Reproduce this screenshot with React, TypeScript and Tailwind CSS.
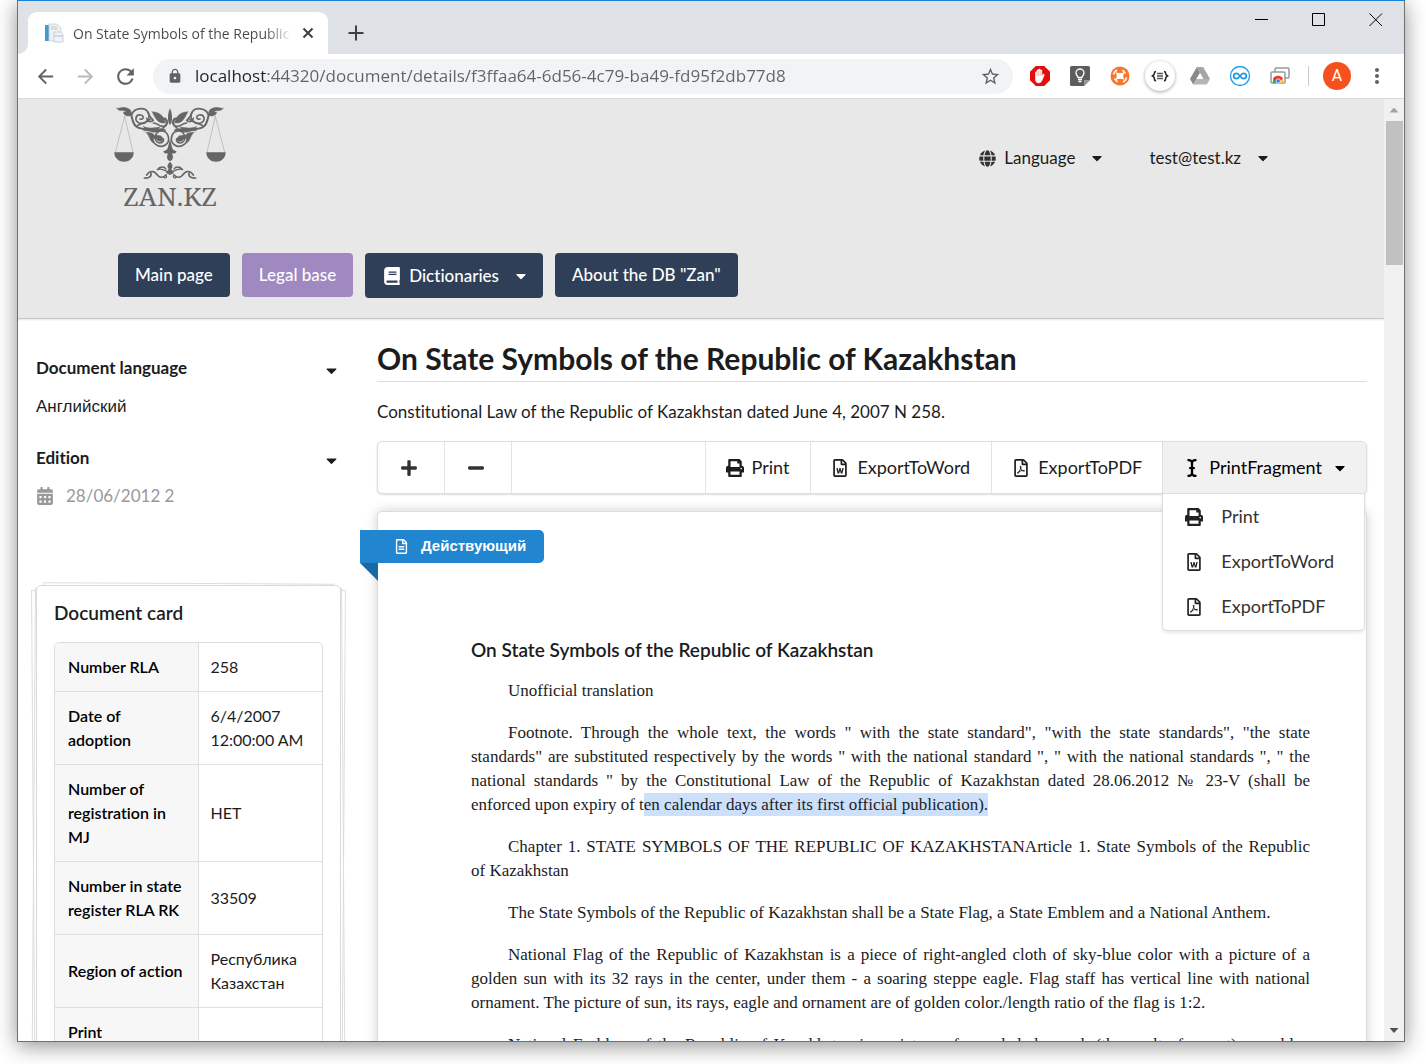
import { FaPrint, FaRegFileWord, FaRegFilePdf, FaICursor, FaPlus, FaMinus, FaGlobe, FaCaretDown, FaBook, FaRegFileAlt, FaCalendarAlt } from "react-icons/fa";
import { MdArrowBack, MdArrowForward, MdRefresh, MdLock, MdStarBorder, MdMoreVert } from "react-icons/md";

function Favicon() {
  return (
    <svg width="20" height="20" viewBox="0 0 20 20" className="shrink-0" aria-hidden="true">
      <rect x="1" y="2" width="4" height="16" fill="#3f9bd8" />
      <path d="M5 1h8l4 4v13H5z" fill="#eef1f4" stroke="#c9ced3" strokeWidth=".8" />
      <path d="M7 4h6M7 6h7" stroke="#c5cad0" />
      <path d="M10 9h7l2 3v7h-9z" fill="#f1f3f6" stroke="#bcc4d4" strokeWidth=".8" />
      <path d="M10 13h9" stroke="#b5bed2" />
    </svg>
  );
}

function TitleBar() {
  return (
    <div className="flex h-[53px] shrink-0 items-end justify-between bg-[#dee1e6]">
      <div className="flex h-full items-end">
        <div className="h-3 w-[10px] rounded-br-[10px] bg-[#dee1e6] shadow-[4px_4px_0_4px_#fff] [clip-path:inset(0)]" />
        <div className="flex h-[42px] w-[300px] items-center rounded-t-[9px] bg-white pl-4">
          <Favicon />
          <span className="ml-[9px] w-[219px] overflow-hidden whitespace-nowrap bg-linear-to-r from-[#45494d] from-88% to-white bg-clip-text font-['Open_Sans','Noto_Sans',sans-serif] text-[14px] text-transparent">
            On State Symbols of the Republic
          </span>
          <button aria-label="Close tab" className="ml-[10px]">
            <svg width="12" height="12" viewBox="0 0 12 12" className="block"><path d="M1.500 1.500l9 9M10.500 1.500l-9 9" stroke="#3c4043" strokeWidth="2" /></svg>
          </button>
        </div>
        <button aria-label="New tab" className="mb-[13px] ml-5">
          <svg width="16" height="16" viewBox="0 0 16 16" className="block"><path d="M8 .5v15M.5 8h15" stroke="#3c4043" strokeWidth="2" /></svg>
        </button>
      </div>
      <div className="flex h-full items-start gap-[43px] pr-[21px] pt-[11px]">
        <button aria-label="Minimize"><svg width="14" height="14" viewBox="0 0 14 14" className="block"><path d="M0 7.500h13" stroke="#000" /></svg></button>
        <button aria-label="Maximize"><svg width="14" height="14" viewBox="0 0 14 14" className="block"><path d="M.5 1.500h12v12H.5z" fill="none" stroke="#000" /></svg></button>
        <button aria-label="Close"><svg width="14" height="14" viewBox="0 0 14 14" className="block"><path d="M.5 1.500l12.500 12.500M13 1.500L.5 14" stroke="#000" /></svg></button>
      </div>
    </div>
  );
}

function Extensions() {
  return (
    <div className="flex items-center gap-[18px]">
      <button aria-label="Ad blocker">
        <svg width="22" height="22" viewBox="0 0 22 22" className="block">
          <path d="M6.800 1h8.400L21 6.800v8.400L15.200 21H6.800L1 15.200V6.800z" fill="#e40d0d" />
          <path d="M6.500 11.500V7.200q.7-1 1.400 0V5.400q.8-1.200 1.600 0V4.600q.8-1.200 1.600 0v.6q.9-1.100 1.700 0v5.800l1-1.500q1.200-.8 1.600.3l-2.500 5.800q-.9 2.300-3 2.300-3.200 0-3.400-3z" fill="#fff" stroke="#fff" strokeWidth=".6" />
          <path d="M8 7v4M9.600 6v5M11.200 6v5" stroke="#e40d0d" strokeWidth=".3" />
        </svg>
      </button>
      <button aria-label="Notes">
        <svg width="22" height="22" viewBox="0 0 22 22" className="block">
          <path d="M2.500 1h17q1.500 0 1.500 1.500V15l-6 6H2.500Q1 21 1 19.500v-17Q1 1 2.500 1z" fill="#5d5d5d" />
          <path d="M15 21v-6h6z" fill="#9b9b9b" />
          <path d="M9 12.500c0-1.500-2-2.200-2-4.500a4 4 0 018 0c0 2.300-2 3-2 4.500zM9 14.500h4M9.500 16.500h3" fill="none" stroke="#fff" strokeWidth="1.300" />
        </svg>
      </button>
      <button aria-label="Orbit">
        <svg width="22" height="22" viewBox="0 0 22 22" className="block">
          <circle cx="11" cy="11" r="9.500" fill="#f4772b" />
          <path d="M8 8.500q3 1 6 0-1 2.500 0 5-3-1-6 0 1-2.500 0-5z" fill="#fff" stroke="#fff" strokeWidth="1.500" />
          <path d="M4.500 9.500q.5-3 3.500-4.500M17.500 12.500q-.5 3-3.500 4.500M13.500 5l3 3.500M5.500 13.500l3 3.500" fill="none" stroke="#fff" strokeWidth="1.600" />
        </svg>
      </button>
      <button aria-label="JSON viewer" className="-mx-1 flex size-[30px] items-center justify-center rounded-full bg-white shadow-[0_1px_3px_1px_#00000038]">
        <svg width="18" height="14" viewBox="0 0 18 14" className="block">
          <path d="M5 2.500Q3.500 2.500 3.500 4T1.500 7q2 .8 2 3t1.500 1.500M13 2.500q1.500 0 1.500 1.500t2 3q-2 .8-2 3t-1.500 1.500" fill="none" stroke="#222" strokeWidth="1.600" />
          <path d="M6 4.500h6M6 7h6M6 9.500h6" stroke="#555" strokeWidth="1.300" />
        </svg>
      </button>
      <button aria-label="Drive">
        <svg width="22" height="22" viewBox="0 0 22 22" className="block">
          <path d="M7.800 2h6.400L21 14H14z" fill="#a5a5a5" />
          <path d="M7.800 2L1 14l3.200 5.500L11 8z" fill="#8a8a8a" />
          <path d="M7.500 14H21l-3.200 5.500H4.200z" fill="#b5b5b5" />
          <path d="M11 8l3.500 6h-7z" fill="#fff" />
        </svg>
      </button>
      <button aria-label="Infinity">
        <svg width="22" height="22" viewBox="0 0 22 22" className="block">
          <circle cx="11" cy="11" r="9.500" fill="#fff" stroke="#1b9be8" strokeWidth="1.300" />
          <path d="M11 11c-1.800-2.500-2.800-2.700-3.600-2.700a2.700 2.700 0 000 5.400c1 0 2.100-.6 3.600-2.700s2.600-2.700 3.600-2.700a2.700 2.700 0 010 5.400c-.8 0-1.800-.2-3.600-2.700z" fill="none" stroke="#1b9be8" strokeWidth="1.800" />
        </svg>
      </button>
      <button aria-label="Cast tabs">
        <svg width="22" height="22" viewBox="0 0 22 22" className="block">
          <rect x="6" y="3" width="14" height="10" rx="1" fill="#fff" stroke="#999" strokeWidth="1.500" />
          <rect x="2" y="7" width="14" height="11" rx="1" fill="#fff" stroke="#999" strokeWidth="1.500" />
          <path d="M4 18a5 5 0 011-5l4 5z" fill="#2fa84f" />
          <path d="M4 14a5.500 5.500 0 0110 0l-3 2H7z" fill="#e23c2e" />
          <path d="M14 14a5 5 0 010 4h-5z" fill="#f8c52b" />
          <circle cx="9.200" cy="16" r="2.200" fill="#3b7ded" stroke="#fff" strokeWidth=".7" />
        </svg>
      </button>
    </div>
  );
}

function Toolbar() {
  return (
    <div className="flex h-[45px] shrink-0 items-center border-b border-[#d5d7da] bg-white pl-4 pr-[15px] text-[#5f6368]">
      <button aria-label="Back"><MdArrowBack size={23} /></button>
      <button aria-label="Forward" className="ml-[17px] text-[#b8babd]"><MdArrowForward size={23} /></button>
      <button aria-label="Reload" className="ml-4"><MdRefresh size={25} /></button>
      <div className="ml-[15px] flex h-[35px] flex-1 items-center rounded-full bg-[#f1f3f4] pl-[14px] pr-3">
        <MdLock size={16} />
        <input
          aria-label="Address"
          readOnly
          value="localhost:44320/document/details/f3ffaa64-6d56-4c79-ba49-fd95f2db77d8"
          className="ml-3 min-w-0 flex-1 bg-linear-to-r from-[#202124] from-[72px] to-[#5f6368] to-[72px] bg-clip-text font-['Open_Sans','Noto_Sans',sans-serif] text-[17px] text-transparent outline-none"
        />
        <button aria-label="Bookmark"><MdStarBorder size={21} /></button>
      </div>
      <div className="ml-4 flex items-center">
        <Extensions />
        <div className="ml-[17px] h-5 w-px bg-[#ccc]" />
        <button aria-label="Account" className="ml-[14px] size-7 rounded-full bg-[#f6511d] font-['Roboto',sans-serif] text-[16px] text-white">A</button>
        <button aria-label="Menu" className="ml-[14px]"><MdMoreVert size={24} /></button>
      </div>
    </div>
  );
}

function HalfOrnament() {
  return (
    <g fill="none" stroke="#666" strokeWidth="5" strokeLinecap="round" strokeLinejoin="round">
      <path d="M104 64L76 172M104 64l25 108" stroke="#999" strokeWidth="1.500" />
      <path d="M73 172h58c0 38-58 38-58 0z" fill="#666" stroke="none" />
      <path d="M80 40c12 0 16-6 28-2 14 2 18 14 14 24-10 4-22-2-22-10l8-2c-10-6-18 2-28-10z" fill="#666" strokeWidth="1" />
      <path d="M118 46c10 14 6 36 20 48 12 10 28 10 50 8" strokeWidth="6" />
      <path d="M126 58c4-18 38-24 48-6 10 20-8 38-26 32-16-6-12-26 4-24 12 2 8 16-2 12" />
      <path d="M174 52c4 14 8 18 16 24-10 8-18 2-20-6M142 92c12-8 28-8 40-20" />
      <path d="M186 50c22 0 36 12 40 34-22 2-28-10-40-34z" fill="#666" strokeWidth="1" />
      <path d="M190 84c14 0 18 12 30 10 14-2 12-24-2-24M226 70c10 10 6 22-6 28" />
      <path d="M160 94c14 8 34 4 50 2l-4 6c10-4 18-4 22 6-12-4-20 4-32 4-14 0-22-8-36-4 6-4 4-8 0-14z" fill="#666" strokeWidth="1" />
      <path d="M168 112c20-2 30 8 28 20-4-4-8 0-6 12-12-6-10-20-22-32z" fill="#666" strokeWidth="1" />
      <path d="M188 134c4 16 22 26 38 16 16-10 12-40-10-42-22-2-28 32-8 36 10 0 14-6 12-12" />
      <path d="M198 120l14 2 8 8-4 10-12-2-8-8z" fill="#666" strokeWidth="1" />
      <path d="M163 249c12 2 22-4 20-14M170 240c10-16 24-12 32 0 8 10 18 8 26 0" />
      <path d="M202 224c12-6 24 2 34 8M228 240c4 6 0 10-6 8M204 222c6-8 20-8 24 0" strokeWidth="4" />
    </g>
  );
}

function Logo() {
  return (
    <a href="#" className="-ml-1 block w-28 text-center">
      <svg width="112" height="74" viewBox="72 36 336 222" className="block" aria-hidden="true">
        <HalfOrnament />
        <g transform="translate(480 0) scale(-1 1)"><HalfOrnament /></g>
        <path d="M240 40c6 12 8 30 4 44l-4 6-4-6c-4-14-2-32 4-44zM240 132l6 24c2 12 12 10 14 14-4 8-12 4-14 6 6 10 2 20-6 22-8-2-12-12-6-22-2-2-10 2-14-6 2-4 12-2 14-14zM240 200c8 8 10 14 4 22l8 12-12 6-12-6 8-12c-6-8-4-14 4-22z" fill="#666" />
        <path d="M240 90l12 14-12 14-12-14z" fill="#e8e8e8" />
      </svg>
      <span className="mt-[2px] block font-['Noto_Serif','Liberation_Serif',serif] text-[26px] leading-[26px] text-[#666]">ZAN.KZ</span>
    </a>
  );
}

function Header() {
  return (
    <header className="flex h-[220px] shrink-0 flex-col border-b border-[#c6c6c6] bg-[#e8e8e8] px-[100px] shadow-[0_1px_2px_#0000001a]">
      <div className="flex h-[116px] justify-between pt-2">
        <Logo />
        <div className="mr-[13px] flex h-[102px] items-center gap-11 text-[17px] text-[#1c1c1c]">
          <button className="flex items-center"><FaGlobe size={17} className="mr-2 text-[#333]" />Language<FaCaretDown size={16} className="ml-[14px]" /></button>
          <button className="flex items-center">test@test.kz<FaCaretDown size={16} className="ml-[14px]" /></button>
        </div>
      </div>
      <nav className="mt-[38px] flex items-start gap-3 text-[17px] font-medium text-white">
        <a href="#" className="flex h-11 items-center rounded-[4px] bg-[#2e3f57] px-[17px]">Main page</a>
        <a href="#" className="flex h-11 items-center rounded-[4px] bg-[#a088c0] px-[17px]">Legal base</a>
        <button className="flex h-[45px] items-center rounded-[4px] bg-[#2e3f57] px-[14px]"><FaBook size={18} className="ml-1 mr-2" />Dictionaries<FaCaretDown size={16} className="ml-[14px]" /></button>
        <a href="#" className="flex h-11 items-center rounded-[4px] bg-[#2e3f57] px-[17px]">About the DB "Zan"</a>
      </nav>
    </header>
  );
}

const rows = [
  ["Number RLA", "258"],
  ["Date of adoption", "6/4/2007 12:00:00 AM"],
  ["Number of registration in MJ", "НЕТ"],
  ["Number in state register RLA RK", "33509"],
  ["Region of action", "Республика Казахстан"],
  ["Print", ""],
];

function Sidebar() {
  return (
    <aside className="w-[324px] shrink-0 pl-[18px] pt-[37px] text-[#1b1c1d]">
      <button className="flex w-[304px] items-center justify-between text-[17px] font-bold leading-6">Document language<FaCaretDown size={17} className="mt-1" /></button>
      <p className="mt-[15px] font-['Liberation_Sans',sans-serif] text-[17px] leading-6">Английский</p>
      <button className="mt-[27px] flex w-[304px] items-center justify-between text-[17px] font-bold leading-6">Edition<FaCaretDown size={17} className="mt-1" /></button>
      <p className="mt-[14px] flex items-center text-[17px] leading-6 text-[#999]"><FaCalendarAlt size={18} className="mr-3" />28/06/2012 2</p>
      <div className="relative mt-[77px] w-[305px]">
        <div className="absolute inset-x-[7px] -top-[2px] h-8 rotate-[0.3deg] border border-[#dcdddd]" />
        <div className="absolute -left-[3px] -right-[3px] top-1 h-[560px] -rotate-[0.4deg] border border-[#dcdddd]" />
        <div className="absolute -left-[3px] -right-[3px] top-1 h-[560px] rotate-[0.4deg] border border-[#dcdddd]" />
        <section className="relative rounded-[5px] border border-[#d8d9d9] bg-white px-[17px] pb-5 pt-[15px]">
          <h2 className="text-[19px] font-semibold leading-6">Document card</h2>
          <div className="mt-[17px] overflow-hidden rounded-[5px] border border-[#dcdddd]">
            <table className="w-full border-collapse text-[16px] leading-6">
              <tbody>
                {rows.map(([k, v]) => (
                  <tr key={k} className="border-b border-[#dfe0e0]">
                    <th scope="row" className="w-[143px] border-r border-[#dcdddd] bg-[#f7f7f7] px-[13px] py-3 text-left font-semibold text-black">{k}</th>
                    <td className="px-3 py-3">{v}</td>
                  </tr>
                ))}
              </tbody>
            </table>
          </div>
        </section>
      </div>
    </aside>
  );
}

function ActionBar() {
  return (
    <div className="relative z-10 mt-[17px] flex h-[53px] rounded-[5px] border border-[#dcdddd] bg-white text-[18px] text-[#1b1c1d] shadow-[0_1px_2px_#22242626]">
      <button aria-label="Zoom in" className="flex w-[67px] items-center justify-center border-r border-[#e4e4e5] pr-1"><FaPlus size={18} className="text-[#333]" /></button>
      <button aria-label="Zoom out" className="flex w-[67px] items-center justify-center border-r border-[#e4e4e5] pr-1"><FaMinus size={18} className="text-[#333]" /></button>
      <div className="flex-1" />
      <button className="flex items-center border-l border-[#e4e4e5] pl-5 pr-[21px]"><FaPrint size={18} className="mr-2" />Print</button>
      <button className="flex items-center border-l border-[#e4e4e5] pl-5 pr-[21px]"><FaRegFileWord size={18} className="mr-2" />ExportToWord</button>
      <button className="flex items-center border-l border-[#e4e4e5] px-5"><FaRegFilePdf size={18} className="mr-2" />ExportToPDF</button>
      <div className="relative flex">
        <button className="flex items-center rounded-r-[4px] border-l border-[#dcdddd] bg-[#f1f1f1] pl-5 pr-[18px] text-black"><FaICursor size={18} className="mr-2" />PrintFragment<FaCaretDown size={16} className="ml-[10px]" /></button>
        <ul className="absolute left-0 right-px top-[51px] rounded-b-[5px] border border-[#dcdddd] bg-white pb-px text-[#333] shadow-[0_2px_3px_#2224261a]">
          <li><button className="flex h-[45px] w-full items-center pl-[22px]"><FaPrint size={18} className="mr-[18px] text-[#222]" />Print</button></li>
          <li><button className="flex h-[45px] w-full items-center pl-[22px]"><FaRegFileWord size={18} className="mr-[18px] text-[#222]" />ExportToWord</button></li>
          <li><button className="flex h-[45px] w-full items-center pl-[22px]"><FaRegFilePdf size={18} className="mr-[18px] text-[#222]" />ExportToPDF</button></li>
        </ul>
      </div>
    </div>
  );
}

function Document() {
  return (
    <article className="relative mt-[17px] rounded-[5px] border border-[#dcdddd] bg-white pl-[93px] pr-[56px] pt-[126px] text-[#1b1c1d] shadow-[0_0_12px_#00000030]">
      <div className="absolute -left-[18px] top-[18px]">
        <div className="flex h-[33px] w-[184px] items-center rounded-r-[5px] bg-[#2185d0] pl-[34px] font-['Liberation_Sans',sans-serif] text-[15px] font-bold text-white"><FaRegFileAlt size={15} className="mr-3" />Действующий</div>
        <div className="size-[18px] bg-[#1a69a4] [clip-path:polygon(0_0,100%_0,100%_100%)]" />
      </div>
      <h3 className="text-[19px] font-semibold leading-6">On State Symbols of the Republic of Kazakhstan</h3>
      <div className="mt-[17px] space-y-[18px] text-justify font-['Liberation_Serif',serif] text-[17px] leading-6 [&>p]:indent-[37px]">
        <p>Unofficial translation</p>
        <p>Footnote. Through the whole text, the words " with the state standard", "with the state standards", "the state standards" are substituted respectively by the words " with the national standard ", " with the national standards ", " the national standards " by the Constitutional Law of the Republic of Kazakhstan dated 28.06.2012 № 23-V (shall be enforced&nbsp;upon expiry of <mark className="bg-linear-to-r from-transparent from-[5px] to-[#cce0fb] to-[5px] bg-transparent py-[2px] text-inherit">ten calendar days after its first official publication).</mark></p>
        <p>Chapter 1. STATE SYMBOLS OF THE REPUBLIC OF KAZAKHSTANArticle 1. State Symbols of the Republic of&nbsp;Kazakhstan</p>
        <p>The State Symbols of the Republic of Kazakhstan shall be a State Flag, a State Emblem and a National Anthem.</p>
        <p>National Flag of the Republic of Kazakhstan is a piece of right-angled cloth of sky-blue color with a picture of a golden sun with its 32 rays in the center, under them - a soaring steppe eagle. Flag staff has vertical line with national ornament. The picture of sun, its rays, eagle and ornament are of golden color./length ratio of the flag is 1:2.</p>
        <p>National Emblem of the Republic of Kazakhstan is a picture of rounded shanyrak (the vault of a yurt) on a blue background</p>
      </div>
    </article>
  );
}

export default function App() {
  return (
    <div className="h-screen overflow-hidden bg-white pb-[22px] pl-[17px] pr-[21px] font-['Lato','Roboto',sans-serif] [font-variant-ligatures:none]">
      <div className="flex h-full flex-col overflow-hidden border border-[#707070] border-t-[#1a80d4] bg-white shadow-[0_4px_20px_#00000070]">
        <TitleBar />
        <Toolbar />
        <div className="flex min-h-0 flex-1">
          <div className="min-w-0 flex-1 overflow-hidden">
            <Header />
            <div className="flex">
              <Sidebar />
              <main className="min-w-0 flex-1 pl-[35px] pr-[17px] pt-5">
                <h1 className="border-b border-[#dcdddd] pb-1 text-[30px] font-bold leading-[38px] text-[#1b1c1d]">On State Symbols of the Republic of Kazakhstan</h1>
                <p className="mt-[18px] text-[17px] leading-6 text-[#1b1c1d]">Constitutional Law of the Republic of Kazakhstan dated June 4, 2007 N 258.</p>
                <ActionBar />
                <Document />
              </main>
            </div>
          </div>
          <div className="flex w-5 shrink-0 flex-col items-center bg-[#f1f1f1]">
            <div className="flex h-[22px] items-center"><div className="h-[5px] w-[9px] bg-[#a3a3a3] [clip-path:polygon(50%_0,100%_100%,0_100%)]" /></div>
            <div className="h-36 w-[17px] bg-[#c1c1c1]" />
            <div className="mt-auto mb-2 h-[5px] w-[9px] bg-[#505050] [clip-path:polygon(0_0,100%_0,50%_100%)]" />
          </div>
        </div>
      </div>
    </div>
  );
}
